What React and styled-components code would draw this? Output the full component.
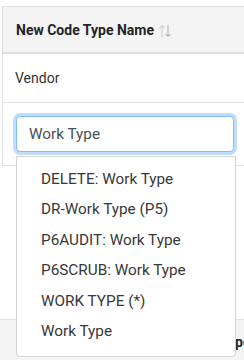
import * as React from 'react';
import styled, { createGlobalStyle } from 'styled-components'

const Global = createGlobalStyle`
  body {
    margin: 0;
    background: white;
    font-family: Roboto, "Liberation Sans", sans-serif;
  }
`
const Page = styled.div`
  width: 244px;
  height: 360px;
  overflow: hidden;
  padding: 6px 0 0 2px;
  box-sizing: border-box;
`
const Table = styled.div`
  border-left: 1px solid #dee2e6;
  border-top: 1px solid #dee2e6;
  width: 300px;
`
const HeadRow = styled.div`
  display: flex;
  align-items: center;
  height: 45px;
  padding-left: 13px;
  background: #f4f4f4;
  border-bottom: 2px solid #dee2e6;
  font-weight: 700;
  font-size: 14px;
  color: #212529;
`
const SortIcon = styled.svg`
  margin-left: 5px;
  margin-top: 3px;
`
const Row = styled.div`
  display: flex;
  align-items: center;
  height: ${p => p.h}px;
  padding-left: 12px;
  border-bottom: 1px solid #dee2e6;
  font-size: 14px;
  color: #333;
`
const EditRow = styled.div`
  height: 49px;
  padding: 13px 0 0 13px;
  border-bottom: 1px solid #dee2e6;
`
const Field = styled.div`
  position: relative;
  width: 218px;
`
const Input = styled.div`
  height: 36px;
  box-sizing: border-box;
  border: 1px solid #80bdff;
  border-radius: 4px;
  box-shadow: 0 0 0 3px #c0dcfb;
  padding-left: 12px;
  display: flex;
  align-items: center;
  font-size: 15.3px;
  color: #495057;
  background: white;
`
const Menu = styled.ul`
  position: absolute;
  z-index: 5;
  top: 40px;
  left: 0;
  width: 220px;
  height: 201px;
  box-sizing: border-box;
  margin: 0;
  padding: 7px 0 0;
  list-style: none;
  background: white;
  border: 1px solid #d4d4d4;
  border-radius: 0 0 4px 4px;
`
const Item = styled.li`
  height: 30.4px;
  line-height: 30.4px;
  padding-left: 24px;
  font-size: 15.3px;
  color: #383838;
`
const Spacer = styled.div`
  height: 153px;
`
const Footer = styled.div`
  display: flex;
  height: 60px;
  margin-left: -2px;
  width: 300px;
  background: #f4f4f4;
  border-top: 1px solid #dee2e6;
`
const FootCell = styled.div`
  width: ${p => p.w}px;
  padding: 14px 0 0 16px;
  font-weight: 700;
  font-size: 14px;
  color: #212529;
`

const options = [
  'DELETE: Work Type',
  'DR-Work Type (P5)',
  'P6AUDIT: Work Type',
  'P6SCRUB: Work Type',
  'WORK TYPE (*)',
  'Work Type',
]

export default function App() {
  return (
    <Page>
      <Global />
      <Table>
        <HeadRow>
          New Code Type Name
          <SortIcon width="12" height="14" viewBox="0 0 12 14" fill="none" strokeWidth="1.2" strokeLinecap="round">
            <path d="M3 13V1.5M1 3.5L3 1.5L5 3.5" stroke="#d2d2d2" />
            <path d="M9 1V12.5M7 10.5L9 12.5L11 10.5" stroke="#bdbdbd" />
          </SortIcon>
        </HeadRow>
        <Row h={48}>Vendor</Row>
        <EditRow>
          <Field>
            <Input>Work Type</Input>
            <Menu>
              {options.map(o => <Item key={o}>{o}</Item>)}
            </Menu>
          </Field>
        </EditRow>
      </Table>
      <Spacer />
      <Footer>
        <FootCell w={171}>Code</FootCell>
        <FootCell w={130}>Code Type</FootCell>
      </Footer>
    </Page>
  )
}
